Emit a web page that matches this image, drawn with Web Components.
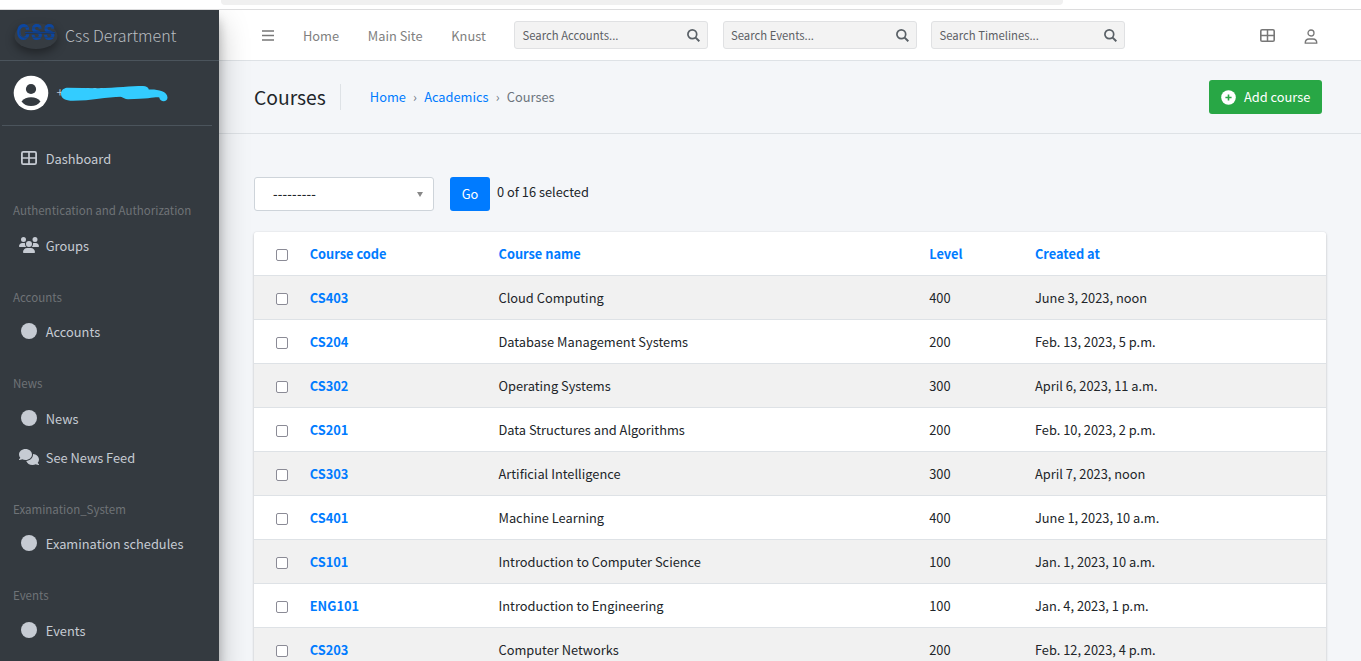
<!DOCTYPE html>
<html lang="en">
<head>
<meta charset="utf-8">
<title>Courses</title>
<style>
html,body{margin:0;height:100%;overflow:hidden;background:#fff}
body{font-family:"Noto Sans CJK SC","Noto Sans",sans-serif;font-size:12.84px;line-height:20px;color:#212529}
</style>
</head>
<body>
<admin-app></admin-app>
<script>
const define=(name,css,html)=>customElements.define(name,class extends HTMLElement{
  constructor(){
    super();
    const root=this.attachShadow({mode:'open'});
    const t=document.createElement('template');
    t.innerHTML='<style>*{box-sizing:border-box}'+css+'</style>'+(typeof html==='function'?html(this):html);
    root.append(t.content.cloneNode(true));
  }
});
const attr=(el,n)=>el.getAttribute(n)||'';

const icons={
  grid:'<svg width="16" height="14" viewBox="0 0 16 14" fill="none" stroke="currentColor"><rect x=".9" y=".9" width="14.2" height="12.2" rx="1.4" stroke-width="1.8"/><path d="M8 1v12M1 7h14" stroke-width="1.700"/></svg>',
  users:'<svg width="20" height="16" viewBox="0 0 640 512" fill="currentColor"><path d="M144 0a80 80 0 1 1 0 160A80 80 0 1 1 144 0zM512 0a80 80 0 1 1 0 160A80 80 0 1 1 512 0zM0 298.700C0 239.800 47.800 192 106.700 192h42.700c15.900 0 31 3.500 44.600 9.700-1.300 7.200-1.900 14.700-1.900 22.300 0 38.200 16.800 72.500 43.300 96H21.300C9.600 320 0 310.400 0 298.700zM405.300 320h-.7c26.600-23.500 43.300-57.800 43.300-96 0-7.600-.7-15-1.900-22.300 13.600-6.300 28.700-9.700 44.600-9.700h42.700C592.200 192 640 239.800 640 298.700c0 11.800-9.600 21.300-21.300 21.300H405.300zM224 224a96 96 0 1 1 192 0 96 96 0 1 1-192 0zM128 485.300C128 411.700 187.700 352 261.300 352h117.300C452.300 352 512 411.700 512 485.300c0 14.700-11.900 26.700-26.700 26.700H154.700c-14.700 0-26.700-11.900-26.700-26.700z"/></svg>',
  circle:'<svg width="16" height="16" viewBox="0 0 16 16"><circle cx="8" cy="8" r="8" fill="currentColor"/></svg>',
  comments:'<svg width="20" height="16" viewBox="0 0 640 512" fill="currentColor"><path d="M208 352c114.900 0 208-78.800 208-176S322.900 0 208 0 0 78.800 0 176c0 38.600 14.700 74.300 39.600 103.400-3.500 9.400-8.700 17.700-14.200 24.700-4.800 6.200-9.700 11-13.300 14.300-1.800 1.600-3.300 2.900-4.300 3.700C1.200 327-1.400 334.400.8 340.900S9.100 352 16 352c21.800 0 43.800-5.600 62.100-12.500 9.200-3.500 17.800-7.400 25.300-11.400C134.100 343.300 169.800 352 208 352zM448 176c0 112.300-99.100 196.900-216.500 207C255.800 457.400 336.400 512 432 512c38.200 0 73.900-8.700 104.700-23.900 7.500 4 16 7.900 25.200 11.400C580.200 506.400 602.200 512 624 512c6.900 0 13.100-4.500 15.200-11.100s-.4-13.900-6.900-18.700c-1-.8-2.500-2-4.300-3.700-3.600-3.300-8.500-8.100-13.300-14.300-5.500-7-10.700-15.400-14.200-24.700C625.300 410.300 640 374.600 640 336c0-92.800-84.900-168.900-192.600-175.500.4 5.100.6 10.300.6 15.500z"/></svg>'
};

define('browser-strip',`:host{display:block;height:10px;border-bottom:1px solid #dcdcdd;background:#fff;padding-left:221px}
div{width:842px;height:5px;background:#f0f0f0;border-radius:0 0 4px 4px}`,'<div></div>');

define('side-section',`:host{display:block;height:47.6px;padding:21.5px 0 0 13px;color:#6f7377;font-size:11.53px;line-height:20px;white-space:nowrap}`,'<slot></slot>');

define('side-item',`:host{display:flex;align-items:center;height:39px;color:#c6cbd3;padding-left:18px;white-space:nowrap}
i{width:20px;display:flex;justify-content:center;margin:-2px 7.200px 0 .6px}span{line-height:20px}`,
 el=>'<i>'+icons[attr(el,'icon')]+'</i><span><slot></slot></span>');

define('brand-mark',`:host{display:flex;align-items:center;height:51px;border-bottom:1px solid #4b545c;color:#b9bdc1;padding-left:10px;font-size:16.05px;font-weight:300}
svg{flex:none;overflow:visible;filter:drop-shadow(0 4px 5px rgba(0,0,0,.38))}span{margin-left:5px;white-space:nowrap}text{font-family:Inter,sans-serif;font-weight:800}`,
`<svg width="50" height="51" viewBox="0 0 50 51"><ellipse cx="26" cy="26" rx="21.500" ry="13" fill="#363c42"/><g fill="#0c46a0" font-size="21"><text x="6.500" y="30.300" textLength="13.500" lengthAdjust="spacingAndGlyphs">C</text><text x="21" y="30.300" textLength="11.500" lengthAdjust="spacingAndGlyphs">S</text><text x="33.500" y="30.300" textLength="11.500" lengthAdjust="spacingAndGlyphs">S</text></g><path d="M15 22.600h30" stroke="#1f2f4d" stroke-width="1.800"/><path d="M15 22.600h30" stroke="#0c46a0" stroke-width=".8"/><path d="M18 17.200q-8.500 0-8.500 5.400t8.500 5.400M22 18h23M22 27.400h23" stroke="#363c42" stroke-width=".6" fill="none"/></svg><span><slot></slot></span>`);

define('user-panel',`:host{display:flex;align-items:center;position:relative;height:65px;margin:0 7px 0 2px;border-bottom:1px solid #4b545c;color:#c2c7d0;padding-left:11px}
.a{flex:none}span{margin:-3px 0 0 7.500px;font-size:12.5px}.ink{position:absolute;left:57px;top:23px}`,
`<svg class="a" width="36" height="36" viewBox="0 0 36 36"><circle cx="18" cy="18" r="17.300" fill="#fff"/><circle cx="18" cy="14" r="5.100" fill="#343a40"/><path d="M8.500 26.500Q12 22.300 18 22.300t9.500 4.200Q24 31 18 31t-9.500-4.500z" fill="#343a40"/></svg><span><slot></slot></span>
<svg class="ink" width="110" height="20" viewBox="0 0 110 20"><path d="M9 3.800L39 4.300C58 3.800 72 2 84 2C87 2 89.500 3.300 89.800 5.500C97 5 108.500 6.500 108.500 13.500C108.500 18.500 101 18.500 100.300 13.500C96 12.800 90 15.200 69 15.200C66 15.200 64 13.500 62 12.800C48 13 32 16.800 14 16.800C6 16.800 2 14 2 10C2 6 5 3.800 9 3.800z" fill="#33ccff"/></svg>`);

define('side-bar',`:host{display:block;position:relative;z-index:2;width:219px;background:#343a40;box-shadow:0 14px 28px rgba(0,0,0,.25),0 10px 10px rgba(0,0,0,.22);overflow:visible}
nav{padding-top:13.5px}`,
`<brand-mark>Css Derartment</brand-mark><user-panel>+0000000000</user-panel>
<nav><side-item icon="grid">Dashboard</side-item>
<side-section>Authentication and Authorization</side-section><side-item icon="users">Groups</side-item>
<side-section>Accounts</side-section><side-item icon="circle">Accounts</side-item>
<side-section>News</side-section><side-item icon="circle">News</side-item><side-item icon="comments">See News Feed</side-item>
<side-section>Examination_System</side-section><side-item icon="circle">Examination schedules</side-item>
<side-section>Events</side-section><side-item icon="circle">Events</side-item></nav>`);

define('search-box',`:host{display:flex;align-items:center;width:194px;height:28px;border:1px solid #e0e1e3;border-radius:3px;background:#f3f3f3;color:#5c6065;font-size:11.3px;padding:0 7px 0 7.500px;margin-right:14.500px;justify-content:space-between;white-space:nowrap}span{line-height:20px}svg{margin-top:1px}`,
`<span><slot></slot></span><svg width="13" height="13" viewBox="0 0 13 13" fill="none" stroke="#596066" stroke-width="1.700"><circle cx="5.300" cy="5.300" r="4.400"/><path d="M8.600 8.600l3.700 3.700" stroke-width="2"/></svg>`);

define('top-nav',`:host{display:flex;align-items:center;height:51px;background:#fff;border-bottom:1px solid #dee2e6;color:#808080;padding:0 43px 0 43px}
.burger{flex:none;margin-right:29px}a{margin:1px 28.700px 0 0;white-space:nowrap}.search{display:flex;margin:-1px 0 0 -.4px}.tools{margin-left:auto;display:flex;align-items:center;gap:29px}`,
`<svg class="burger" width="12" height="11" viewBox="0 0 12 11" stroke="#777" stroke-width="1.700"><path d="M0 1h12M0 5.500h12M0 10h12"/></svg>
<a>Home</a><a>Main Site</a><a>Knust</a>
<div class="search"><search-box>Search Accounts...</search-box><search-box>Search Events...</search-box><search-box>Search Timelines...</search-box></div>
<div class="tools"><svg width="15" height="13" viewBox="0 0 15 13" fill="none" stroke="#777"><rect x=".8" y=".8" width="13.400" height="11.400" rx="1.300" stroke-width="1.600"/><path d="M7.500 1v11M1 6.500h13" stroke-width="1.500"/></svg>
<svg width="14" height="15" viewBox="0 0 14 15" fill="none" stroke="#777" stroke-width="1.300" style="margin-top:2px"><circle cx="7" cy="4" r="3"/><path d="M1.200 14.200c0-2.700 1.700-4.200 3.900-4.200h3.800c2.200 0 3.900 1.500 3.900 4.200z" stroke-linejoin="round"/></svg></div>`);

define('page-head',`:host{display:flex;align-items:center;height:73px;border-bottom:1px solid #dee2e6;padding:0 39px 0 35px}
h1{margin:0;font-weight:400;font-size:19.3px;line-height:26px;padding-right:14px;border-right:1px solid #dee2e6}
nav{display:flex;margin-left:29px;color:#6c757d}nav a{color:#007bff}nav b{font-weight:400;width:18.200px;text-align:center}
.add{margin-left:auto;display:flex;align-items:center;width:113px;height:34px;border-radius:3px;background:#28a745;color:#fff;padding-left:12px;gap:8px;white-space:nowrap}`,
`<h1>Courses</h1><nav><a>Home</a><b>›</b><a>Academics</a><b>›</b><span>Courses</span></nav>
<div class="add"><svg width="15" height="15" viewBox="0 0 15 15"><circle cx="7.500" cy="7.500" r="7.300" fill="#fff"/><path d="M7.500 4.400v6.200M4.400 7.500h6.200" stroke="#28a745" stroke-width="1.600"/></svg><span>Add course</span></div>`);

define('action-bar',`:host{display:flex;align-items:flex-start;height:34px;margin:43px 0 21px 35px}
.sel{width:180px;height:34px;border:1px solid #ced4da;border-radius:3px;background:#fff;display:flex;align-items:center;justify-content:space-between;padding:0 10px 0 18px;color:#212529}
.sel span{letter-spacing:.2px;font-weight:500}
.sel::after{content:"";border:3.5px solid transparent;border-top:5px solid #888;border-bottom:0}
.go{width:40px;height:34px;line-height:34px;text-align:center;background:#007bff;color:#fff;border-radius:3px;margin:0 7px 0 16px}.n{line-height:30px}`,
`<div class="sel"><span>---------</span></div><div class="go">Go</div><span class="n">0 of 16 selected</span>`);

define('check-box',`:host{display:block;width:12px;height:12px;border:1px solid #8b8b96;border-radius:2px;background:#fff;margin:2px 0 0 22px}`,'');

define('course-row',`:host{display:grid;grid-template-columns:55.700px 188.800px 430.700px 105.800px 1fr;align-items:center;height:44px;border-top:1px solid #dee2e6;background:#fff;white-space:nowrap}
:host([odd]){background:#f1f1f1}:host([head]){height:43px;border-top:0;border-radius:3px 3px 0 0;font-weight:700;color:#007bff;font-size:12.8px}b{color:#007bff;font-weight:700}`,
 el=>{const v=attr(el,'values').split('|');return `<check-box></check-box><b>${v[0]}</b><span>${v[1]}</span><span>${v[2]}</span><span>${v[3]}</span>`;});

const courses=['CS403|Cloud Computing|400|June 3, 2023, noon','CS204|Database Management Systems|200|Feb. 13, 2023, 5 p.m.','CS302|Operating Systems|300|April 6, 2023, 11 a.m.','CS201|Data Structures and Algorithms|200|Feb. 10, 2023, 2 p.m.','CS303|Artificial Intelligence|300|April 7, 2023, noon','CS401|Machine Learning|400|June 1, 2023, 10 a.m.','CS101|Introduction to Computer Science|100|Jan. 1, 2023, 10 a.m.','ENG101|Introduction to Engineering|100|Jan. 4, 2023, 1 p.m.','CS203|Computer Networks|200|Feb. 12, 2023, 4 p.m.'];
define('course-table',`:host{display:block;width:1072px;margin-left:35px;border-radius:3px;box-shadow:0 0 1px rgba(0,0,0,.13),0 1px 3px rgba(0,0,0,.2)}`,
 '<course-row head values="Course code|Course name|Level|Created at"></course-row>'+courses.map((c,i)=>`<course-row ${i%2?'':'odd'} values="${c}"></course-row>`).join(''));

define('admin-app',`:host{display:flex;flex-direction:column;height:661px;overflow:hidden}
.body{display:grid;grid-template-columns:219px 1fr;height:651px;overflow:hidden}main{background:#f4f6f9;min-width:0}`,
`<browser-strip></browser-strip><div class="body"><side-bar></side-bar><main><top-nav></top-nav><page-head></page-head><action-bar></action-bar><course-table></course-table></main></div>`);
</script>
</body>
</html>
